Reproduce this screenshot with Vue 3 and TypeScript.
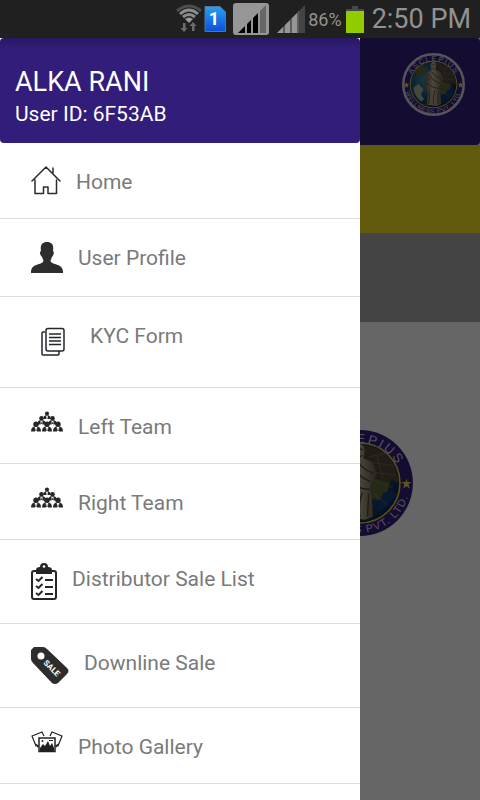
<script setup lang="ts">
type IconName = 'home' | 'user' | 'form' | 'team' | 'checklist' | 'sale' | 'gallery'

interface MenuItem {
  label: string
  icon: IconName
}

const user = { name: 'ALKA RANI', id: '6F53AB' }

const items: MenuItem[] = [
  { label: 'Home', icon: 'home' },
  { label: 'User Profile', icon: 'user' },
  { label: 'KYC Form', icon: 'form' },
  { label: 'Left Team', icon: 'team' },
  { label: 'Right Team', icon: 'team' },
  { label: 'Distributor Sale List', icon: 'checklist' },
  { label: 'Downline Sale', icon: 'sale' },
  { label: 'Photo Gallery', icon: 'gallery' },
]

const people = [
  { x: 16, y: 0, s: 0.75 },
  { x: 10.5, y: 4.5, s: 0.85 },
  { x: 21.5, y: 4.5, s: 0.85 },
  { x: 5, y: 10, s: 1 },
  { x: 16, y: 10, s: 1 },
  { x: 27, y: 10, s: 1 },
]
</script>

<template>
  <div class="screen">
    <header class="status">
      <svg class="wifi" viewBox="0 0 26 30" aria-hidden="true">
        <g fill="none" stroke-width="3">
          <path d="M1 7Q13-3 25 7" stroke="#4c4c4c" />
          <path d="M4 10Q13 2 22 10M7 13Q13 8 19 13" stroke="#8c8c8c" />
        </g>
        <path d="M9 15Q13 12 17 15L13 19Z" fill="#9a9a9a" />
        <path d="M7 19h2.500v5h2l-3.500 4-3.500-4h2.500ZM16 27h2.500v-5h2l-3.500-4-3.500 4h2.500Z" fill="#6c6c6c" />
      </svg>
      <svg class="sim" viewBox="0 0 22 26" aria-hidden="true">
        <defs>
          <linearGradient id="simFill" x1="0" y1="0" x2="0" y2="1">
            <stop offset="0" stop-color="#2ba0ee" />
            <stop offset="1" stop-color="#0b4fd8" />
          </linearGradient>
        </defs>
        <path d="M1 .5H16L21.500 6V25.500H1Z" fill="url(#simFill)" stroke="#55779c" />
        <text x="10" y="19" text-anchor="middle" class="sim-number">1</text>
      </svg>
      <svg class="signal-box" viewBox="0 0 36 32" aria-hidden="true">
        <rect width="36" height="32" rx="3" fill="#969696" />
        <path d="M5 30L27 8V30Z" fill="#000" />
        <path d="M27 8L33 2V30H27Z" fill="#666" />
        <path d="M13 20V30M19 14V30M26 8V30" stroke="#969696" stroke-width="2" />
      </svg>
      <svg class="signal" viewBox="0 0 28 28" aria-hidden="true">
        <path d="M0 28L22 6V28Z" fill="#969696" />
        <path d="M22 6L28 0V28H22Z" fill="#444" />
        <path d="M7 20V28M14 14V28M21 7V28" stroke="#222" />
      </svg>
      <span class="percent">86%</span>
      <svg class="battery" viewBox="0 0 18 27" aria-hidden="true">
        <path d="M6 0H12V3H18V6H0V3H6Z" fill="#484848" />
        <rect y="5" width="18" height="22" fill="#91cc00" />
      </svg>
      <time class="clock">2:50 PM</time>
    </header>

    <div class="stage">
      <main class="page">
        <svg class="defs" width="0" height="0" aria-hidden="true">
          <defs>
            <radialGradient id="globe" cx=".35" cy=".4" r=".7">
              <stop offset="0" stop-color="#3f8ea8" />
              <stop offset=".5" stop-color="#1c5078" />
              <stop offset="1" stop-color="#0d2448" />
            </radialGradient>
            <linearGradient id="stone" x1="0" x2="1">
              <stop offset="0" stop-color="#6a5f48" />
              <stop offset=".45" stop-color="#bdb094" />
              <stop offset="1" stop-color="#6a5f4a" />
            </linearGradient>
            <path id="arcTop" d="M11 52A39 39 0 0 1 89 52" />
            <path id="arcBottom" d="M4 50A46 46 0 0 0 96 50" />
            <symbol id="seal" viewBox="0 0 100 100">
              <circle cx="50" cy="50" r="49" fill="#321e7e" />
              <circle cx="50" cy="50" r="37" fill="url(#globe)" stroke="#d9cf38" stroke-width="1.500" />
              <path d="M53 15Q76 18 83 37L86 50 79 47 75 56 69 51 65 59 59 53 58 40 54 30Z" fill="#54483a" />
              <path d="M60 45L77 50 75 62 68 66 60 64ZM20 30L31 19 40 23 36 34 25 38Z" fill="#5e6a38" />
              <path d="M68 66L72 59 80 56 84 61 75 72 66 77Z" fill="#123d78" />
              <path d="M60 31L82 34M62 40L84 43M58 26L74 22M63 60L76 70M64 48L80 54M66 25L71 45" stroke="#8b8459" stroke-width=".5" />
              <path d="M18 55L26 49 34 58 30 66 35 73 31 77Q20 70 18 55Z" fill="#a4b49c" />
              <path d="M50 14Q55 15 54 22L53 27 60 30Q66 37 65 44L60 51Q59 57 61 64L62 81 55 84 39 82 41 66 38 54 36 45Q36 34 41 30L47 27 45 20Q46 14 50 14Z" fill="url(#stone)" />
              <path d="M42 34Q48 44 60 49M47 30Q54 38 62 41M40 47Q47 56 59 56M43 59Q45 70 42 80M52 59Q48 70 50 82M58 60L57 81M40 40L44 43" fill="none" stroke="#4f4635" stroke-width="1.300" />
              <path d="M47 19Q50 17 53 20M48 24Q50 27 52 24" fill="none" stroke="#4b432f" />
              <path d="M7 46L8 49H12L9 51 10 55 7 53 4 55 5 51 2 49H6ZM93 46L94 49H98L95 51 96 55 93 53 90 55 91 51 88 49H92Z" fill="#e5d25c" />
              <text class="seal-text"><textPath href="#arcTop" startOffset="50%" text-anchor="middle">ASCLEPIUS</textPath></text>
              <text class="seal-text seal-small"><textPath href="#arcBottom" startOffset="50%" text-anchor="middle">WELLNESS PVT. LTD.</textPath></text>
            </symbol>
          </defs>
        </svg>
        <div class="appbar">
          <svg class="logo" viewBox="0 0 100 100" role="img" aria-label="Asclepius Wellness">
            <use href="#seal" width="100" height="100" />
            <circle cx="50" cy="50" r="48" fill="none" stroke="#d5d3df" stroke-width="4" />
          </svg>
        </div>
        <div class="band yellow"></div>
        <div class="band gray"></div>
        <div class="tiles">
          <svg class="tile-logo" viewBox="0 0 100 100" aria-hidden="true">
            <use href="#seal" width="100" height="100" />
          </svg>
        </div>
      </main>
      <div class="scrim"></div>

      <aside class="drawer">
        <div class="account">
          <h1>{{ user.name }}</h1>
          <p>User ID: {{ user.id }}</p>
        </div>
        <nav>
          <a v-for="item in items" :key="item.label" href="#" class="item">
            <svg v-if="item.icon === 'home'" class="icon home" viewBox="0 0 30 30" aria-hidden="true">
              <path d="M1 15L15 1 29 15M22 7V2M4 14V27.500H12.500V21H17V27.500H25.500V14" fill="none" stroke="#2b2b2b" stroke-width="1.500" stroke-linejoin="round" stroke-linecap="round" />
            </svg>
            <svg v-else-if="item.icon === 'user'" class="icon user" viewBox="0 0 32 32" aria-hidden="true">
              <path d="M16 0C21 0 23 3 22 9C24 10 22 14 21 15C20 18 19 18 20 20C23 23 31 22 32 29V31H0V29C1 22 9 23 12 20C13 18 12 18 11 15C9 13 8 10 10 9C9 3 11 0 16 0Z" fill="#2d2d2d" />
            </svg>
            <svg v-else-if="item.icon === 'form'" class="icon form" viewBox="0 0 44 45" aria-hidden="true">
              <g fill="#fff" stroke="#22262b" stroke-width="1.500">
                <path d="M14 9H12Q11 9 11 10V31Q11 32 12 32H27Q28 32 28 31V28" transform="translate(0 3)" />
                <rect x="15" y="8.500" width="18" height="22.500" rx="2" />
                <path d="M18 14H30M18 17.500H30M18 21H30M18 24.500H30" />
              </g>
            </svg>
            <svg v-else-if="item.icon === 'team'" class="icon team" viewBox="0 0 32 20" aria-hidden="true">
              <g v-for="(p, i) in people" :key="i" :transform="`translate(${p.x} ${p.y}) scale(${p.s})`">
                <path d="M-2 5L2 5Q5 6 5 10H1L0 6-1 10H-5Q-5 6-2 5Z" fill="#262626" />
                <path d="M-1.300 5.500H1.300L.8 10H-.8Z" fill="#fff" />
                <circle cx="0" cy="2.700" r="2.700" fill="#262626" />
                <path d="M0 6L-.7 9.500H.7Z" fill="#262626" />
              </g>
            </svg>
            <svg v-else-if="item.icon === 'checklist'" class="icon checklist" viewBox="0 0 26 38" aria-hidden="true">
              <rect x="1" y="8" width="24" height="28" rx="2" fill="#fff" stroke="#252525" stroke-width="2" />
              <path d="M5 11V7Q5 4 9 4Q9 0 13 0Q17 0 17 4Q21 4 21 7V11Z" fill="#252525" />
              <circle cx="13" cy="3.500" r="1.300" fill="#fff" />
              <path d="M5 16L7.500 18 11.500 14M5 23L7.500 25 11.500 21M5 30L7.500 32 11.500 28M14 17H22M14 24H22M14 31H22" fill="none" stroke="#252525" stroke-width="2" />
            </svg>
            <svg v-else-if="item.icon === 'sale'" class="icon sale" viewBox="0 0 38 38" aria-hidden="true">
              <path d="M3 0H12Q14 0 16 2L36 21Q39 24 36 27L27 36Q24 38 21 36L2 16Q0 14 0 12V3Z" fill="#2d2d2d" />
              <circle cx="10" cy="9" r="3.500" fill="#fff" />
              <text x="21" y="24" text-anchor="middle" transform="rotate(45 21 21)" class="sale-text">SALE</text>
            </svg>
            <svg v-else class="icon gallery" viewBox="0 0 32 22" aria-hidden="true">
              <path d="M8 15H5L1 5 11 1 13 5M19 5L21 1 31 5 27 15H24" fill="none" stroke="#202020" stroke-width="1.200" />
              <path d="M4 12L7 14V17ZM28 12L25 14V17Z" fill="#202020" />
              <rect x="8" y="7" width="16" height="13.500" fill="#fff" stroke="#202020" stroke-width="1.500" />
              <path d="M9 19V17L12 13 14 15 17 10 19 15 21 12 23 17V20H9Z" fill="#202020" />
              <circle cx="11.500" cy="10" r="1" fill="#202020" />
              <path d="M18 9.500H22" stroke="#202020" />
            </svg>
            <span class="label">{{ item.label }}</span>
          </a>
        </nav>
      </aside>
    </div>
  </div>
</template>

<style>
body {
  margin: 0;
}
</style>

<style scoped>
.screen {
  display: flex;
  flex-direction: column;
  height: 100vh;
  overflow: hidden;
  font-family: Roboto, "Liberation Sans", sans-serif;
}

.status {
  display: flex;
  flex: none;
  align-items: center;
  justify-content: flex-end;
  height: 38px;
  padding-right: 9px;
  background: #202020;
  color: #929292;
}

.status svg {
  flex: none;
}

.wifi {
  width: 26px;
  height: 30px;
  margin-right: 2px;
}

.sim {
  width: 22px;
  height: 26px;
  margin-right: 7px;
}

.sim-number {
  fill: #fff;
  font-size: 18px;
  font-weight: 700;
}

.signal-box {
  width: 36px;
  height: 32px;
  margin-right: 8px;
}

.signal {
  width: 28px;
  height: 28px;
  margin-right: 3px;
}

.percent {
  margin-right: 4px;
  font-size: 18px;
}

.battery {
  width: 18px;
  height: 27px;
  margin-right: 8px;
}

.clock {
  font-size: 27px;
}

.stage {
  position: relative;
  flex: 1;
  min-height: 0;
}

.page {
  display: flex;
  flex-direction: column;
  height: 100%;
  background: #fff;
}

.defs {
  position: absolute;
}

.appbar {
  box-sizing: border-box;
  display: flex;
  flex: none;
  align-items: flex-start;
  justify-content: flex-end;
  height: 107px;
  padding: 15px;
  border-radius: 4px;
  background: #321e7a;
}

.logo {
  width: 63px;
  height: 63px;
}

.band {
  flex: none;
  height: 88px;
}

.yellow {
  background: #f5e120;
}

.gray {
  height: 89px;
  background: #aaa;
}

.tiles {
  display: grid;
  grid-template-columns: 1fr 1fr;
  padding-top: 107px;
}

.tile-logo {
  grid-column: 2;
  justify-self: center;
  width: 108px;
  height: 108px;
}

.seal-text {
  fill: #d4d0dc;
  font-family: "Liberation Sans", sans-serif;
  font-size: 12px;
  letter-spacing: 2px;
}

.seal-small {
  font-size: 10px;
  letter-spacing: 1px;
}

.scrim {
  position: absolute;
  inset: 0;
  background: rgba(0, 0, 0, 0.6);
}

.drawer {
  position: absolute;
  top: 0;
  bottom: 0;
  left: 0;
  width: 75%;
  overflow: hidden;
  background: #fff;
}

.account {
  box-sizing: border-box;
  height: 105px;
  padding: 28px 15px 0;
  border-radius: 4px;
  background: linear-gradient(#281863, #321e7a 12px);
  color: #fff;
}

.account h1 {
  margin: 0;
  font-size: 27px;
  font-weight: 400;
  line-height: 32px;
}

.account p {
  margin: 0;
  font-size: 21px;
  line-height: 32px;
}

.item {
  display: flex;
  align-items: flex-start;
  gap: 15px;
  padding: 23px 15px 22px 31px;
  border-bottom: 1px solid #dedede;
  color: #7a7a7a;
  text-decoration: none;
}

.icon {
  flex: none;
  width: 32px;
}

.home {
  width: 30px;
  height: 30px;
}

.user {
  height: 32px;
}

.form {
  width: 44px;
  height: 45px;
}

.team {
  height: 21px;
}

.checklist {
  width: 26px;
  height: 38px;
}

.sale {
  width: 38px;
  height: 38px;
}

.gallery {
  height: 22px;
}

.sale-text {
  fill: #fff;
  font-size: 8px;
  font-weight: 700;
}

.label {
  padding-top: 2px;
  font-size: 21px;
  line-height: 28px;
}
</style>
